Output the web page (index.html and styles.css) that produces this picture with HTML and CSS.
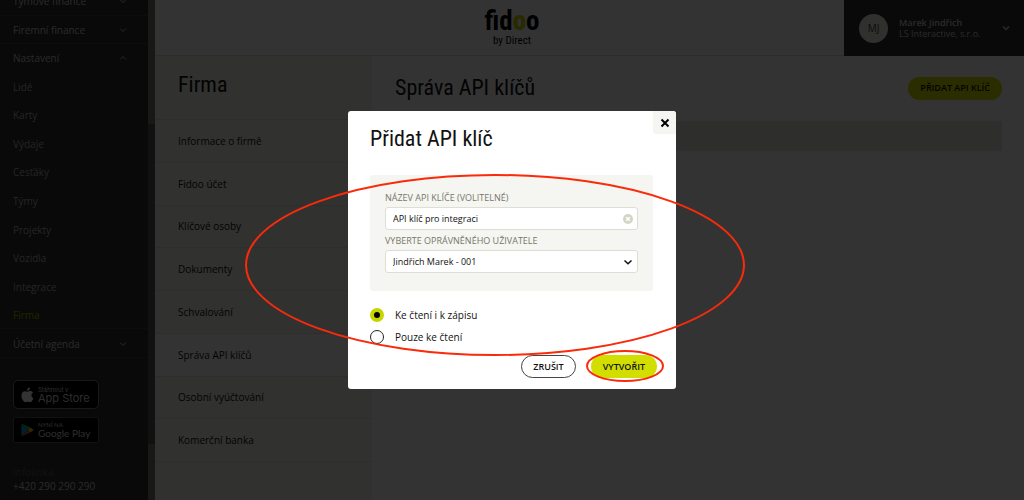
FILE: index.html
```html
<!DOCTYPE html>
<html lang="cs">
<head>
    <meta charset="UTF-8">
    <meta name="viewport" content="width=device-width, initial-scale=1.0">
    <title>Fidoo - Správa API klíčů</title>
    <link rel="stylesheet" href="styles.css">
</head>
<body>

    <div class="app">
        <!-- Main menu -->
        <aside class="sidebar">
            <div class="sidebar-content">
                <nav class="menu">
                    <a href="#" class="group">Týmové finance <svg class="chevron" viewBox="0 0 8 8"><path d="M1 2.5l3 3 3-3"/></svg></a>
                    <a href="#" class="group">Firemní finance <svg class="chevron" viewBox="0 0 8 8"><path d="M1 2.5l3 3 3-3"/></svg></a>
                    <a href="#" class="group open">Nastavení <svg class="chevron" viewBox="0 0 8 8"><path d="M1 5.5l3-3 3 3"/></svg></a>
                    <a href="#">Lidé</a>
                    <a href="#">Karty</a>
                    <a href="#">Výdaje</a>
                    <a href="#">Cesťáky</a>
                    <a href="#">Týmy</a>
                    <a href="#">Projekty</a>
                    <a href="#">Vozidla</a>
                    <a href="#">Integrace</a>
                    <a href="#" class="active">Firma</a>
                    <a href="#" class="group">Účetní agenda <svg class="chevron" viewBox="0 0 8 8"><path d="M1 2.5l3 3 3-3"/></svg></a>
                </nav>

                <div class="stores">
                    <a href="#" class="store apple">
                        <svg viewBox="0 0 14 17"><path d="M9.6 0.3c.1 1.1-.4 2-1 2.7-.6.7-1.4 1.1-2.2 1-.1-1 .4-2 1-2.6C8 .8 8.9.4 9.6.3zM12.9 6c-1.1.7-1.7 1.6-1.7 2.8 0 1.5.9 2.6 2.2 3.1-.4 1.2-1 2.3-1.8 3.3-.6.8-1.2 1.2-2 1.200-.9 0-1.3-.5-2.4-.5-1.100 0-1.500.5-2.400.5-.8 0-1.500-.5-2.200-1.400C1.300 13.300.5 11.200.5 9.100c0-2.900 1.700-4.700 3.700-4.700 1.100 0 2 .7 2.800.7.700 0 1.800-.8 3.100-.8 1.200 0 2.200.6 2.800 1.700z" fill="#fff"/></svg>
                        <span class="store-text"><small>Stáhnout v</small>App Store</span>
                    </a>
                    <a href="#" class="store google">
                        <svg viewBox="0 0 15 17">
                            <path d="M.5 1v15L8 8.5z" fill="#00a0dc"/>
                            <path d="M.5 1L8 8.5l2.8-2.8z" fill="#00c853"/>
                            <path d="M.5 16L8 8.5l2.8 2.8z" fill="#f0364a"/>
                            <path d="M10.8 5.7L8 8.5l2.8 2.8 3.9-2.8z" fill="#ffc400"/>
                        </svg>
                        <span class="store-text"><small>NYNÍ NA</small>Google Play</span>
                    </a>
                </div>

                <div class="infoline">
                    <span>Infolinka</span>
                    <a href="tel:+420290290290">+420 290 290 290</a>
                </div>
            </div>
            <div class="scrollbar"><div class="thumb"></div></div>
        </aside>

        <div class="page">
            <header class="topbar">
                <a href="#" class="logo">
                    <span class="logo-name">fid<b>o</b>o</span>
                    <span class="logo-sub">by Direct</span>
                </a>
                <button class="user">
                    <span class="avatar">MJ</span>
                    <span class="user-text"><strong>Marek Jindřich</strong>LS Interactive, s.r.o.</span>
                    <svg class="chevron" viewBox="0 0 8 8"><path d="M1 2.5l3 3 3-3"/></svg>
                </button>
            </header>

            <div class="columns">
                <!-- Company submenu -->
                <section class="submenu">
                    <h2>Firma</h2>
                    <nav>
                        <a href="#">Informace o firmě</a>
                        <a href="#">Fidoo účet</a>
                        <a href="#">Klíčové osoby</a>
                        <a href="#">Dokumenty</a>
                        <a href="#">Schvalování</a>
                        <a href="#" class="active">Správa API klíčů</a>
                        <a href="#">Osobní vyúčtování</a>
                        <a href="#">Komerční banka</a>
                    </nav>
                </section>

                <main>
                    <div class="main-head">
                        <h1>Správa API klíčů</h1>
                        <button class="btn btn-primary">PŘIDAT API KLÍČ</button>
                    </div>
                    <div class="table-head"></div>
                </main>
            </div>
        </div>
    </div>

    <!-- Add API key dialog -->
    <div class="overlay">
        <form class="modal" role="dialog" aria-labelledby="modal-title">
            <button type="button" class="close" aria-label="Zavřít">
                <svg viewBox="0 0 10 10"><path d="M1.5 1.5l7 7M8.5 1.5l-7 7"/></svg>
            </button>
            <h2 id="modal-title">Přidat API klíč</h2>

            <div class="fields">
                <label for="key-name">NÁZEV API KLÍČE (VOLITELNÉ)</label>
                <div class="control">
                    <input type="text" id="key-name" value="API klíč pro integraci">
                    <button type="button" class="clear" aria-label="Smazat">
                        <svg viewBox="0 0 10 10"><circle cx="5" cy="5" r="5" fill="#d5d5c6"/><path d="M3.2 3.2l3.6 3.6M6.8 3.2L3.2 6.8" stroke="#fff" stroke-width="1.5"/></svg>
                    </button>
                </div>
                <label for="key-user">VYBERTE OPRÁVNĚNÉHO UŽIVATELE</label>
                <div class="control">
                    <select id="key-user">
                        <option>Jindřich Marek - 001</option>
                    </select>
                    <svg class="chevron" viewBox="0 0 10 10"><path d="M1.5 3.5L5 6.8l3.500-3.300"/></svg>
                </div>
            </div>

            <div class="radios">
                <label><input type="radio" name="access" checked>Ke čtení i k zápisu</label>
                <label><input type="radio" name="access">Pouze ke čtení</label>
            </div>

            <div class="actions">
                <button type="button" class="btn btn-outline">ZRUŠIT</button>
                <button type="button" class="btn btn-primary submit">VYTVOŘIT
                    <svg class="mark mark-submit" viewBox="0 0 80 34"><ellipse cx="40" cy="17" rx="38" ry="15"/></svg>
                </button>
            </div>

            <svg class="mark mark-form" viewBox="0 0 502 184"><ellipse cx="251" cy="92" rx="249" ry="90"/></svg>
        </form>
    </div>

</body>
</html>
```

FILE: styles.css
```css
* {
    box-sizing: border-box;
}

body {
    margin: 0;
    font-family: "Open Sans", "Noto Sans", sans-serif;
    font-size: 10px;
    line-height: 14px;
    color: #111;
    background: #fff;
}

a {
    color: inherit;
    text-decoration: none;
}

button, input, select {
    font: inherit;
    color: inherit;
}

button {
    border: 0;
    padding: 0;
    cursor: pointer;
}

h1, h2 {
    margin: 0;
    font-family: "Liberation Sans Narrow", "Roboto Condensed", "DejaVu Sans Condensed", sans-serif;
    font-size: 22px;
    line-height: 28px;
    font-weight: normal;
}

.chevron {
    width: 8px;
    height: 8px;
    fill: none;
    stroke: currentColor;
    stroke-width: 1;
}

.app {
    display: flex;
    height: 100vh;
    overflow: hidden;
}

/* Sidebar */
.sidebar {
    display: flex;
    width: 155px;
    flex-shrink: 0;
    background: #2d2d2d;
    color: #ccc;
}

.sidebar-content {
    flex: 1;
    display: flex;
    flex-direction: column;
    justify-content: flex-end;
    padding-bottom: 7px;
}

.menu {
    display: flex;
    flex-direction: column;
    flex-shrink: 0;
    height: 371px;
}

.menu a {
    flex: 1;
    display: flex;
    align-items: center;
    padding-left: 13px;
    color: #b5b5b0;
    font-weight: 500;
}

.menu .group {
    justify-content: space-between;
    padding-right: 21px;
    box-shadow: inset 0 -1px #444;
    color: #ccc;
    font-weight: normal;
}

.menu .group.open {
    box-shadow: none;
}

.menu a.active {
    color: #a8b400;
    box-shadow: inset 0 -1px #444;
}

.stores {
    display: flex;
    flex-direction: column;
    gap: 8px;
    padding: 22px 0;
}

.store {
    display: flex;
    align-items: center;
    gap: 4px;
    width: 86px;
    height: 29px;
    margin-left: 13px;
    padding-left: 7px;
    border: 1px solid #777;
    border-radius: 5px;
    background: #000;
    color: #ddd;
}

.store.google {
    height: 26px;
    border-radius: 3px;
    border-color: #555;
}

.store svg {
    width: 13px;
    height: 16px;
}

.store-text {
    font-family: Inter, sans-serif;
    font-size: 11px;
    line-height: 11px;
    white-space: nowrap;
}

.google .store-text {
    font-family: Lato, sans-serif;
    font-size: 10px;
}

.store-text small {
    display: block;
    font-size: 6px;
    line-height: 7px;
}

.infoline {
    display: flex;
    flex-direction: column;
    padding-left: 13px;
}

.infoline span {
    color: #5a5a50;
}

.scrollbar {
    width: 7px;
    padding: 124px 0 56px;
    background: #77776f;
}

.scrollbar .thumb {
    height: 100%;
    background: #555;
}

/* Top bar */
.page {
    flex: 1;
    display: flex;
    flex-direction: column;
}

.topbar {
    display: grid;
    grid-template-columns: 1fr 180px;
    height: 56px;
}

.logo {
    display: flex;
    flex-direction: column;
    align-items: center;
    padding: 7px 0 0 25px;
    border-bottom: 1px solid #ddd;
    font-family: "Liberation Sans Narrow", "Roboto Condensed", "DejaVu Sans Condensed", sans-serif;
    color: #000;
}

.logo-name {
    font-size: 27px;
    line-height: 28px;
    font-weight: bold;
}

.logo-name b {
    color: #c8d400;
}

.logo-sub {
    font-size: 11px;
    line-height: 12px;
}

.user {
    display: flex;
    align-items: center;
    padding: 0 14px 0 15px;
    background: #2d2d2d;
    color: #ccc;
    text-align: left;
}

.user .chevron {
    margin-left: auto;
    stroke-width: 1.5;
}

.avatar {
    width: 29px;
    height: 29px;
    margin-right: 11px;
    border-radius: 50%;
    background: #eeeee6;
    color: #444;
    line-height: 29px;
    text-align: center;
}

.user-text {
    font-size: 9px;
    line-height: 11px;
}

.user-text strong {
    display: block;
    font-weight: 600;
}

/* Content */
.columns {
    flex: 1;
    display: flex;
}

.submenu {
    width: 217px;
    background: #f3f3ec;
}

.submenu h2 {
    padding: 15px 23px 20px;
    border-bottom: 1px solid #dfdfd8;
}

.submenu nav {
    display: flex;
    flex-direction: column;
    height: 342px;
}

.submenu nav a {
    flex: 1;
    display: flex;
    align-items: center;
    padding-left: 23px;
    border-bottom: 1px solid #dfdfd8;
}

.submenu nav a.active {
    background: #fff;
}

main {
    flex: 1;
    padding: 18px 22px 0 23px;
}

.main-head {
    display: flex;
    justify-content: space-between;
    align-items: center;
    margin-bottom: 19px;
}

.table-head {
    height: 30px;
    background: #e6e6e0;
}

.btn {
    height: 23px;
    padding: 0 12px;
    border-radius: 12px;
    font-size: 9px;
    font-weight: 600;
}

.btn-primary {
    background: #d2de00;
}

.btn-outline {
    padding: 0 11px;
    border: 1px solid #444;
    background: #fff;
}

/* Dialog */
.overlay {
    position: fixed;
    inset: 0;
    display: flex;
    align-items: center;
    justify-content: center;
    background: rgba(0, 0, 0, 0.8);
}

.modal {
    position: relative;
    width: 328px;
    padding: 14px 19px 11px 22px;
    border-radius: 3px;
    background: #fff;
}

.close {
    position: absolute;
    top: 0;
    right: 0;
    width: 23px;
    height: 23px;
    border-radius: 0 3px 0 3px;
    background: #f5f5f1;
}

.close svg {
    display: block;
    width: 10px;
    height: 10px;
    margin: auto;
    stroke: #000;
    stroke-width: 2;
}

.fields {
    margin: 22px 4px 17px 0;
    padding: 16px 15px 14px;
    border-radius: 3px;
    background: #f5f5f1;
}

.fields label {
    display: block;
    margin-bottom: 2px;
    font-size: 9px;
    font-weight: 500;
    color: #77776a;
}

.control {
    position: relative;
    margin-bottom: 4px;
}

.control input, .control select {
    display: block;
    width: 100%;
    height: 23px;
    padding: 0 7px;
    border: 1px solid #deded2;
    border-radius: 3px;
    background: #fff;
    font-size: 9px;
    appearance: none;
}

.control .clear, .control .chevron {
    position: absolute;
    top: 7px;
    right: 5px;
    width: 10px;
    height: 10px;
    background: none;
    pointer-events: none;
}

.control .chevron {
    stroke-width: 1.5;
}

.clear svg {
    display: block;
}

.radios {
    display: flex;
    flex-direction: column;
    gap: 8px;
}

.radios label {
    display: flex;
    align-items: center;
    gap: 11px;
}

.radios input {
    width: 14px;
    height: 14px;
    margin: 0;
    border: 1px solid #222;
    border-radius: 50%;
    appearance: none;
}

.radios input:checked {
    border: 4px solid #c8d400;
    background: #000;
}

.actions {
    display: flex;
    justify-content: flex-end;
    gap: 15px;
    margin-top: 11px;
}

.submit {
    position: relative;
}

/* Red highlight rings */
.mark {
    position: absolute;
    overflow: visible;
    fill: none;
    stroke: #fa2a0a;
    stroke-width: 2;
    pointer-events: none;
}

.mark-form {
    top: 62px;
    left: -104px;
    width: 502px;
    height: 184px;
}

.mark-submit {
    top: -6px;
    left: -6px;
    width: 80px;
    height: 34px;
}
```
